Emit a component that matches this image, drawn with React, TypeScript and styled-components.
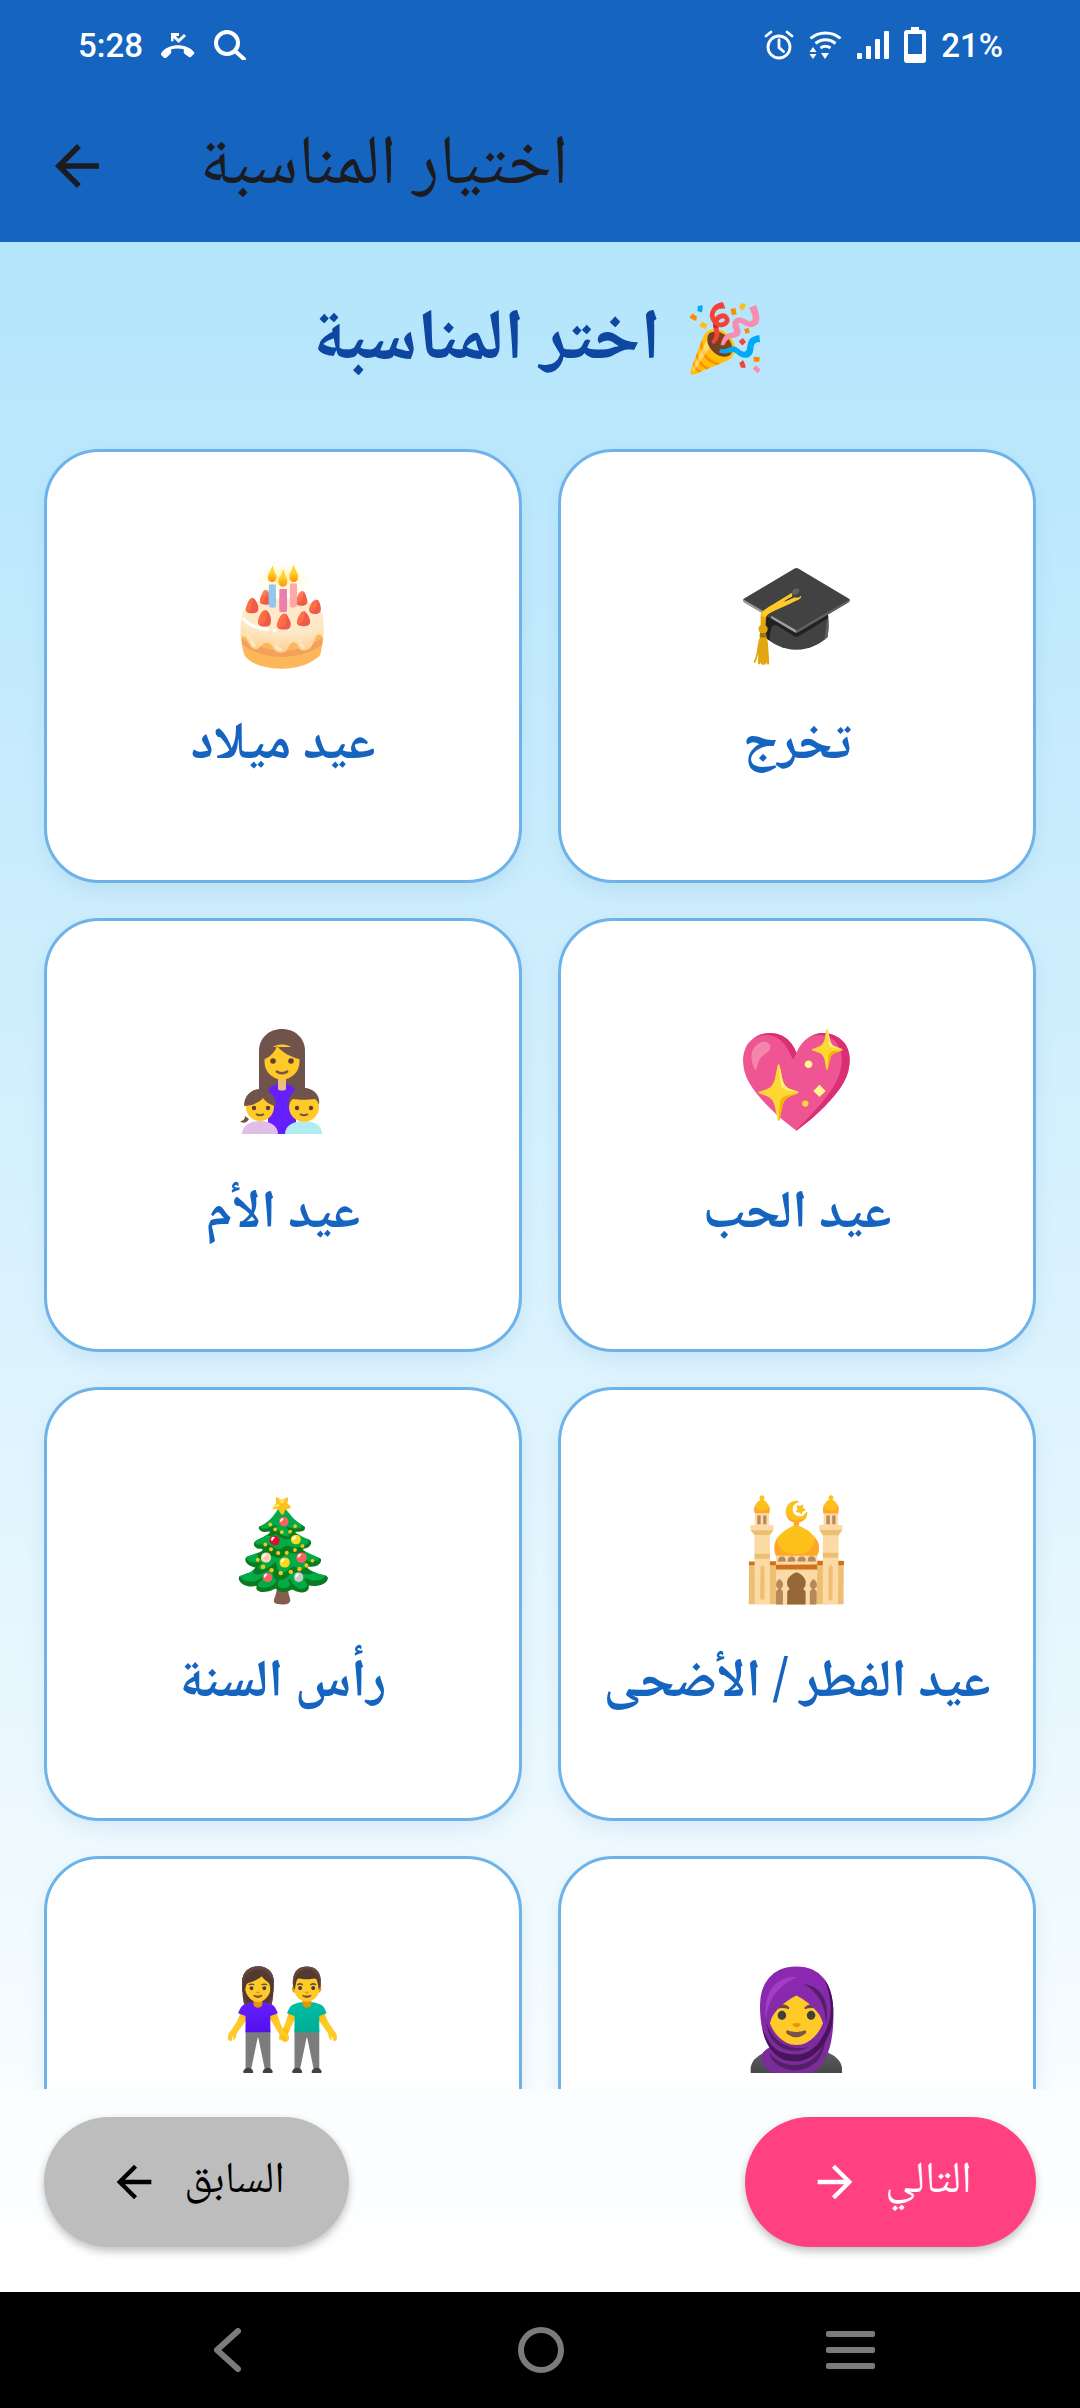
import React from "react";
import styled, { createGlobalStyle } from "styled-components";

const Global = createGlobalStyle`
  html, body { margin: 0; padding: 0; background: #000; }
  * { box-sizing: border-box; }
`;

const Screen = styled.div`
  width: 1080px;
  height: 2408px;
  display: flex;
  flex-direction: column;
  overflow: hidden;
  font-family: "Noto Naskh Arabic", "DejaVu Sans", sans-serif;
`;
const Header = styled.header`
  height: 242px;
  background: #1565c0;
`;
const StatusBar = styled.div`
  height: 90px;
  padding: 0 77px 0 78px;
  display: flex;
  align-items: center;
  justify-content: space-between;
  color: #fff;
  font-family: Roboto, sans-serif;
  font-weight: 500;
  font-size: 33px;
`;
const StatusGroup = styled.div<{ $gap: number }>`
  display: flex;
  align-items: center;
  gap: ${(p) => p.$gap}px;
`;
const Toolbar = styled.div`
  height: 152px;
  padding: 0 0 0 44px;
  display: flex;
  align-items: center;
  gap: 90px;
`;
const Title = styled.h1`
  font-size: 70px;
  font-weight: 400;
  line-height: 1.2;
  color: #1c1b1f;
  margin: 4px 0 0;
`;
const Body = styled.main`
  flex: 1;
  min-height: 0;
  display: flex;
  flex-direction: column;
  background: linear-gradient(#b3e5fc, #fff);
`;
const Scroll = styled.div`
  flex: 1;
  min-height: 0;
  overflow: hidden;
`;
const Heading = styled.h2`
  height: 207px;
  margin: 0;
  padding-bottom: 14px;
  display: flex;
  align-items: center;
  justify-content: center;
  gap: 24px;
  direction: rtl;
  color: #0d47a1;
  font-size: 71.5px;
  font-weight: 700;
`;
const HeadingText = styled.span`
  padding-top: 10px;
`;
const HeadingEmoji = styled.span`
  font-family: "Noto Color Emoji", sans-serif;
  font-weight: 400;
  font-size: 66px;
  line-height: 1;
`;
const Grid = styled.div`
  display: grid;
  grid-template-columns: 478px 478px;
  column-gap: 36px;
  row-gap: 35px;
  padding: 0 44px;
  direction: rtl;
`;
const Card = styled.div`
  height: 434px;
  background: #fff;
  border: 3px solid #6db3ea;
  border-radius: 55px;
  box-shadow: 0 8px 18px rgba(90, 150, 200, 0.14);
  display: flex;
  flex-direction: column;
  align-items: center;
  padding-top: 109px;
`;
const EmojiBox = styled.div`
  height: 105px;
  display: flex;
  align-items: center;
  justify-content: center;
  font-family: "Noto Color Emoji", sans-serif;
  font-size: 97px;
  line-height: 1;
`;
const Label = styled.div`
  margin-top: 46px;
  font-size: 53px;
  font-weight: 700;
  line-height: 70px;
  color: #1565c0;
`;
const Footer = styled.footer`
  height: 203px;
  padding: 28px 44px 0;
  display: flex;
  align-items: flex-start;
  justify-content: space-between;
  direction: rtl;
  background: rgba(255, 255, 255, 0.35);
`;
const PillButton = styled.button<{ $bg: string; $fg: string; $w: number }>`
  width: ${(p) => p.$w}px;
  height: 130px;
  border: 0;
  border-radius: 65px;
  background: ${(p) => p.$bg};
  color: ${(p) => p.$fg};
  box-shadow: 0 4px 8px rgba(0, 0, 0, 0.25);
  display: flex;
  align-items: center;
  justify-content: center;
  gap: 24px;
  font-family: inherit;
  font-size: 44px;
  direction: rtl;
`;
const NavBar = styled.nav`
  height: 116px;
  background: #000;
  padding: 0 0 0 70px;
  display: grid;
  grid-template-columns: 314px 314px 304px;
  justify-items: center;
  align-items: center;
`;

const ArrowBack = ({ size, color }: { size: number; color: string }) => (
  <svg width={size} height={size} viewBox="0 0 24 24" fill={color}>
    <path d="M20 11H7.83l5.59-5.59L12 4l-8 8 8 8 1.41-1.41L7.83 13H20v-2z" />
  </svg>
);
const ArrowForward = ({ size, color }: { size: number; color: string }) => (
  <svg width={size} height={size} viewBox="0 0 24 24" fill={color}>
    <path d="M4 11h12.17l-5.59-5.59L12 4l8 8-8 8-1.41-1.41L16.17 13H4v-2z" />
  </svg>
);

const MissedCall = () => (
  <svg width="34" height="25" viewBox="0 0 34 25" fill="#fff">
    <path d="M1 19C8 10 26 10 33 19c.5.7.4 1.4-.1 1.9l-3 3c-.6.6-1.4.6-2 .1l-4.4-3.2c-.5-.4-.7-.8-.7-1.4v-3.2c-3.700-1.100-8.900-1.100-12.600 0v3.200c0 .6-.2 1-.7 1.400L5.100 25c-.6.5-1.400.5-2-.1l-3-3C-.2 20.400.4 19.700 1 19z" />
    <path d="M10 0h8v3h-3.300l3 3 5.300-5 2 2-7.300 7-5.200-5v3.300h-2.500z" />
  </svg>
);
const SearchIcon = () => (
  <svg width="34" height="30" viewBox="0 0 34 30" fill="none" stroke="#fff" strokeWidth="4" strokeLinecap="round">
    <circle cx="14" cy="13" r="11" />
    <path d="M22 21l9 8" />
  </svg>
);
const AlarmIcon = () => (
  <svg width="30" height="30" viewBox="0 0 30 30" fill="none" stroke="#fff" strokeWidth="2.800" strokeLinecap="round">
    <circle cx="15" cy="17" r="11" />
    <path d="M15 10v7.500l4.500 4M2 6l5-4M28 6l-5-4" />
  </svg>
);
const WifiIcon = () => (
  <svg width="33" height="30" viewBox="0 0 33 30" fill="none" stroke="#fff" strokeWidth="3">
    <path d="M1.500 8.500C9.500 1 23.500 1 31.500 8.500M6.500 13.500c6-5 14-5 20 0M11.500 18c3-2 7-2 10 0" />
    <path d="M0.500 22h7l-3.500-5zM0.500 24h7l-3.500 5zM12 23h8l-4 6z" fill="#fff" stroke="none" />
  </svg>
);
const SignalIcon = () => (
  <svg width="32" height="28" viewBox="0 0 32 28" fill="#fff">
    <rect x="0" y="22" width="5" height="6" rx="1" />
    <rect x="9" y="15" width="5" height="13" rx="1" />
    <rect x="18" y="8" width="5" height="20" rx="1" />
    <rect x="27" y="0" width="5" height="28" rx="1" />
  </svg>
);
const BatteryIcon = () => (
  <svg width="22" height="36" viewBox="0 0 22 36" fill="#fff">
    <path d="M7 0h8v3h4a3 3 0 0 1 3 3v27a3 3 0 0 1-3 3H3a3 3 0 0 1-3-3V6a3 3 0 0 1 3-3h4zM4 7v20h14V7z" fillRule="evenodd" />
  </svg>
);

// the installed emoji font draws this family as a grey silhouette, so it is drawn here
const FamilyEmoji = () => (
  <svg width="90" height="110" viewBox="20 7 90 110">
    <path d="M41 72V30c0-13 10-22 23-22s23 9 23 22v42z" fill="#70534a" />
    <path d="M50 72c0-6 6-9 14-9s14 3 14 9v41H50z" fill="#651fff" />
    <path d="M60 58h8v10c0 2-8 2-8 0z" fill="#edbd82" />
    <circle cx="64" cy="41" r="17.500" fill="#ffca28" />
    <path d="M47 38c5-2 10-7 12-13 6 7 14 11 22 13V26H47z" fill="#70534a" />
    <circle cx="55" cy="40" r="2.800" fill="#5d4037" />
    <circle cx="73" cy="40" r="2.800" fill="#5d4037" />
    <path d="M58 50c4 3 8 3 12 0" stroke="#795548" strokeWidth="2.500" fill="none" />
    <path d="M24 113c0-8 8-13 18-13s18 5 18 13z" fill="#e1bee7" />
    <path d="M22 100c3 0 5-2 5-5l4 3c-2 4-6 5-9 2z" fill="#70534a" />
    <circle cx="42" cy="86" r="14" fill="#ffca28" />
    <path d="M26 85c0-10 7-17 16-17s16 7 16 17c-6-1-10-4-13-8-3 4-11 8-19 8z" fill="#70534a" />
    <circle cx="36" cy="87" r="2.200" fill="#5d4037" />
    <circle cx="50" cy="87" r="2.200" fill="#5d4037" />
    <path d="M38 93c3 2 5 2 8 0" stroke="#795548" strokeWidth="2" fill="none" />
    <path d="M67 113c0-8 8-13 19-13s18 5 18 13z" fill="#b2ebf2" />
    <circle cx="86" cy="86" r="15" fill="#ffca28" />
    <path d="M71 84c-2-10 6-17 15-17s17 7 15 17c-1-3-2-5-4-6-7 1-16 1-22 0-2 1-3 3-4 6z" fill="#70534a" />
    <circle cx="79" cy="87" r="2.200" fill="#5d4037" />
    <circle cx="93" cy="87" r="2.200" fill="#5d4037" />
    <path d="M82 93c3 2 5 2 8 0" stroke="#795548" strokeWidth="2" fill="none" />
  </svg>
);

const occasions: { emoji: React.ReactNode; label?: string }[] = [
  { emoji: "🎓", label: "تخرج" },
  { emoji: "🎂", label: "عيد ميلاد" },
  { emoji: "💖", label: "عيد الحب" },
  { emoji: <FamilyEmoji />, label: "عيد الأم" },
  { emoji: "🕌", label: "عيد الفطر / الأضحى" },
  { emoji: "🎄", label: "رأس السنة" },
  { emoji: "🧕" },
  { emoji: "👫" },
];

export default function App() {
  return (
    <Screen>
      <Global />
      <Header>
        <StatusBar>
          <StatusGroup $gap={18}>
            <span>5:28</span>
            <MissedCall />
            <SearchIcon />
          </StatusGroup>
          <StatusGroup $gap={15}>
            <AlarmIcon />
            <WifiIcon />
            <SignalIcon />
            <BatteryIcon />
            <span>21%</span>
          </StatusGroup>
        </StatusBar>
        <Toolbar>
          <ArrowBack size={66} color="#1c1b1f" />
          <Title>اختيار المناسبة</Title>
        </Toolbar>
      </Header>
      <Body>
        <Scroll>
          <Heading>
            <HeadingEmoji>🎉</HeadingEmoji>
            <HeadingText>اختر المناسبة</HeadingText>
          </Heading>
          <Grid>
            {occasions.map((o, i) => (
              <Card key={i}>
                <EmojiBox>{o.emoji}</EmojiBox>
                {o.label && <Label>{o.label}</Label>}
              </Card>
            ))}
          </Grid>
        </Scroll>
        <Footer>
          <PillButton $bg="#ff4081" $fg="#fff" $w={291}>
            التالي
            <ArrowForward size={52} color="#fff" />
          </PillButton>
          <PillButton $bg="#bdbdbd" $fg="#000" $w={305}>
            السابق
            <ArrowBack size={52} color="#000" />
          </PillButton>
        </Footer>
      </Body>
      <NavBar>
        <svg width="28" height="44" viewBox="0 0 28 44" fill="none" stroke="#7b7b7b" strokeWidth="6" strokeLinecap="round" strokeLinejoin="round">
          <path d="M25 3L4 22l21 19" />
        </svg>
        <svg width="46" height="46" viewBox="0 0 46 46" fill="none" stroke="#7b7b7b" strokeWidth="6">
          <circle cx="23" cy="23" r="20" />
        </svg>
        <svg width="49" height="38" viewBox="0 0 49 38" fill="#7b7b7b">
          <rect y="0" width="49" height="6" rx="2" />
          <rect y="16" width="49" height="6" rx="2" />
          <rect y="32" width="49" height="6" rx="2" />
        </svg>
      </NavBar>
    </Screen>
  );
}
